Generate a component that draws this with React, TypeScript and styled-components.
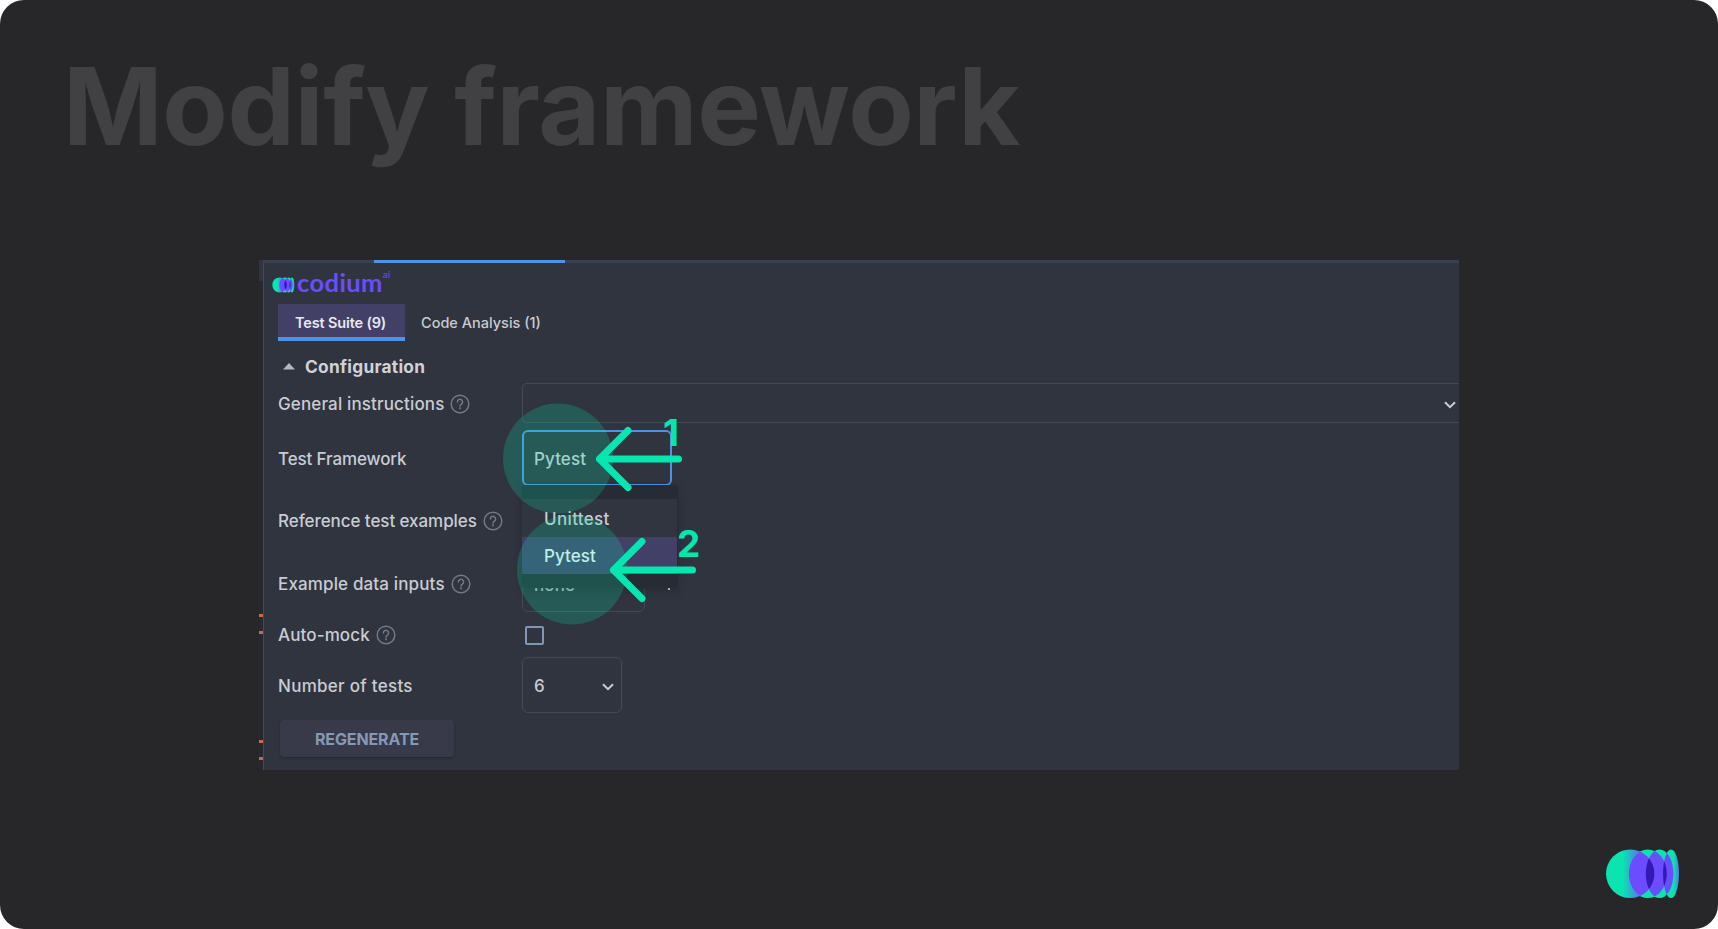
import React from "react";
import styled, { createGlobalStyle } from "styled-components";

const GlobalStyle = createGlobalStyle`
  body { margin: 0; background: #fff; }
  * { box-sizing: border-box; }
`;

const Slide = styled.main`
  position: relative;
  width: 1718px;
  height: 929px;
  background: #272729;
  border-radius: 24px;
  overflow: hidden;
  font-family: Inter, "Liberation Sans", sans-serif;
  color: #c9ccd3;
  padding-top: 41px;
`;

const Title = styled.h1`
  margin: 0 0 89px 63px;
  height: 130px;
  line-height: 130px;
  font-size: 107px;
  font-weight: 700;
  letter-spacing: -0.4px;
  color: #414143;
  white-space: nowrap;
`;

const Shot = styled.section`
  position: relative;
  display: flex;
  width: 1200px;
  height: 510px;
  margin-left: 259px;
`;

const Gutter = styled.div`
  position: relative;
  width: 4px;
  background: linear-gradient(#31353f 21px, #262a30 21px);
`;

const Marker = styled.i<{ $top: number }>`
  position: absolute;
  left: 0;
  top: ${(p) => p.$top}px;
  width: 4px;
  height: 3px;
  background: #c9694c;
`;

const Panel = styled.div`
  flex: 1;
  min-width: 0;
  background: #30343f;
  border-left: 1px solid #444959;
  border-top: 3px solid #3b4050;
  padding-left: 14px;
`;

const ActiveEdge = styled.div`
  width: 191px;
  height: 3px;
  margin: -3px 0 0 96px;
  background: #4f94e4;
`;

const Brand = styled.div`
  display: flex;
  height: 41px;
  margin-left: -6px;
`;

const BrandMark = styled.svg`
  width: 23px;
  height: 16px;
  margin-top: 14px;
`;

const BrandName = styled.span`
  margin: 4px 0 0 2px;
  font: 700 25.5px/30px Lato, sans-serif;
  letter-spacing: 0.4px;
  color: #6b4dff;
`;

const BrandSup = styled.span`
  margin-top: 7px;
  font: 700 9.5px/10px Lato, sans-serif;
  color: #6046e0;
`;

const Tabs = styled.nav`
  display: flex;
  height: 37px;
`;

const Tab = styled.div<{ $active?: boolean; $spacing: number }>`
  padding-left: ${(p) => (p.$active ? 17 : 16)}px;
  width: ${(p) => (p.$active ? "127px" : "auto")};
  line-height: 38px;
  font-size: 14.5px;
  font-weight: ${(p) => (p.$active ? 600 : 500)};
  white-space: nowrap;
  letter-spacing: ${(p) => p.$spacing}px;
  color: ${(p) => (p.$active ? "#e8e8ee" : "#c9ccd3")};
  background: ${(p) => (p.$active ? "#434068" : "transparent")};
  border-bottom: ${(p) => (p.$active ? "4px solid #4f94e4" : "0")};
`;

const SectionHead = styled.div`
  display: flex;
  align-items: center;
  height: 42px;
  padding: 8px 0 0 5px;
  gap: 10px;
  font-size: 17.3px;
  font-weight: 700;
  letter-spacing: 0.27px;
  color: #d0d2d8;
`;

const Form = styled.div`
  display: flex;
  flex-direction: column;
  gap: 7px;
`;

const Row = styled.div<{ $h: number }>`
  display: flex;
  align-items: center;
  height: ${(p) => p.$h}px;
`;

const Label = styled.div<{ $spacing: number; $drop?: boolean }>`
  display: flex;
  align-items: center;
  width: 244px;
  padding-top: ${(p) => (p.$drop ? 1 : 0)}px;
  flex: none;
  font-size: 17px;
  font-weight: 500;
  white-space: nowrap;
  letter-spacing: ${(p) => p.$spacing}px;
`;

const HelpIcon = styled.svg`
  width: 20px;
  height: 20px;
  margin-left: 6px;
`;

const Field = styled.div<{ $w?: number; $focus?: boolean; $open?: boolean }>`
  display: flex;
  align-items: center;
  justify-content: space-between;
  width: ${(p) => (p.$w ? p.$w + "px" : "auto")};
  flex: ${(p) => (p.$w ? "none" : "1")};
  height: 100%;
  padding: 1px ${(p) => (p.$w ? 7 : 3)}px 0 ${(p) => (p.$focus ? 10 : 11)}px;
  border: ${(p) => (p.$focus ? "2px solid #4f94e4" : "1px solid #454957")};
  ${(p) => p.$open && "border-right: 0;"}
  border-radius: ${(p) => (p.$open ? "5px 0 0 5px" : "6px")};
  font-size: 17px;
  font-weight: 500;
  letter-spacing: 0.1px;
  color: #c9ccd3;
`;

const ChevronIcon = styled.svg`
  width: 12px;
  height: 8px;
  margin-top: 2px;
`;

const Checkbox = styled.div`
  width: 19px;
  height: 19px;
  margin: 2px 0 0 3px;
  border: 2px solid #8096b3;
  border-radius: 2px;
`;

const AddIcon = styled.svg`
  width: 14px;
  height: 14px;
  margin: 0 0 0 17px;
`;

const Menu = styled.div`
  position: absolute;
  z-index: 1;
  left: 263px;
  top: 225px;
  width: 156px;
  height: 103px;
  padding: 14px 1px 14px 0;
  background: #272b33;
  border-radius: 2px;
  box-shadow: 0 3px 9px rgba(22, 24, 30, 0.28);
`;

const MenuItem = styled.div<{ $selected?: boolean }>`
  height: ${(p) => (p.$selected ? 37 : 38)}px;
  line-height: ${(p) => (p.$selected ? 38 : 40)}px;
  padding-left: 22px;
  font-size: 17px;
  font-weight: 500;
  letter-spacing: ${(p) => (p.$selected ? 0.05 : 0.35)}px;
  color: ${(p) => (p.$selected ? "#f1f1f5" : "#c9ccd3")};
  background: ${(p) => (p.$selected ? "#434068" : "#31353f")};
`;

const RegenerateButton = styled.button`
  width: 174px;
  height: 37px;
  margin-left: 2px;
  padding: 0;
  border: 0;
  border-radius: 4px;
  background: #383a49;
  box-shadow: 0 1px 2px rgba(20, 22, 28, 0.4);
  font: 700 16px/39px Inter, sans-serif;
  letter-spacing: -0.12px;
  color: #8499b5;
`;

const Callout = styled.div<{ $x: number; $y: number }>`
  position: absolute;
  z-index: 2;
  left: ${(p) => p.$x}px;
  top: ${(p) => p.$y}px;
  width: 200px;
  height: 112px;
`;

const CalloutNumber = styled.span<{ $x: number }>`
  position: absolute;
  left: ${(p) => p.$x}px;
  top: 8px;
  font-size: 37px;
  line-height: 44px;
  font-weight: 650;
  color: #05e6b0;
`;

const CornerLogo = styled.svg`
  position: absolute;
  left: 1605px;
  top: 848px;
  width: 76px;
  height: 52px;
`;

const Help = () => (
  <HelpIcon viewBox="0 0 20 20" fill="none" stroke="#727986" strokeWidth="1.5" strokeLinecap="round">
    <circle cx="10" cy="10" r="8.8" />
    <path d="M7.400 8a2.600 2.600 0 1 1 4 2.100c-.9.6-1.400 1-1.400 2" />
    <circle cx="10" cy="14.3" r=".35" fill="#727986" />
  </HelpIcon>
);

const Chevron = () => (
  <ChevronIcon viewBox="0 0 12 8" fill="none" stroke="#c9ccd3" strokeWidth="2">
    <path d="M1 1.200 6 6.200l5-5" />
  </ChevronIcon>
);

const ellipses = [
  { cx: 25.2, rx: 24.2 },
  { cx: 42.8, rx: 19 },
  { cx: 54.6, rx: 13.8 },
  { cx: 66, rx: 8 },
];

const LogoShapes = ({ id }: { id: string }) => (
  <>
    <defs>
      <linearGradient id={id + "g0"}>
        <stop offset=".35" stopColor="#0be3b0" />
        <stop offset=".85" stopColor="#6b4dff" />
      </linearGradient>
      <linearGradient id={id + "g1"}>
        <stop offset=".68" stopColor="#0be3b0" />
        <stop offset="1" stopColor="#4f7ce0" />
      </linearGradient>
      {ellipses.map((e, i) => (
        <clipPath key={i} id={id + "c" + i}>
          <ellipse cx={e.cx} cy="25.7" rx={e.rx} ry="24.3" />
        </clipPath>
      ))}
    </defs>
    {ellipses.map((e, i) => (
      <ellipse key={i} cx={e.cx} cy="25.7" rx={e.rx} ry="24.3" fill={`url(#${id}g${i ? 1 : 0})`} />
    ))}
    {[1, 2, 3].map((i) => (
      <ellipse key={i} cx={ellipses[i].cx} cy="25.7" rx={ellipses[i].rx} ry="24.3" fill="#6b4dff" clipPath={`url(#${id}c${i - 1})`} />
    ))}
    {[2, 3].map((i) => (
      <ellipse key={i} cx={ellipses[i].cx} cy="25.7" rx={ellipses[i].rx} ry="24.3" fill="#3319b5" clipPath={`url(#${id}c${i - 2})`} />
    ))}
  </>
);

type PointerProps = { x: number; y: number; label: string; labelX: number };

const Pointer = ({ x, y, label, labelX }: PointerProps) => (
  <Callout $x={x} $y={y}>
    <svg width="200" height="112" viewBox="0 0 200 112">
      <circle cx="55" cy="55.5" r="55" fill="#05e6b0" fillOpacity=".21" />
      <g transform="translate(96.5 56)" fill="none" stroke="#05e6b0" strokeWidth="7" strokeLinecap="round" strokeLinejoin="round">
        <path d="M79 0H0M28.500 -28.500 0 0 28.500 28.500" />
      </g>
    </svg>
    <CalloutNumber $x={labelX}>{label}</CalloutNumber>
  </Callout>
);

export default function App() {
  return (
    <>
      <GlobalStyle />
      <Slide>
        <Title>Modify framework</Title>
        <Shot>
          <Gutter>
            {[354, 371, 480, 497].map((top) => (
              <Marker key={top} $top={top} />
            ))}
          </Gutter>
          <Panel>
            <ActiveEdge />
            <Brand>
              <BrandMark viewBox="0 0 76 52" preserveAspectRatio="none">
                <LogoShapes id="brand" />
              </BrandMark>
              <BrandName>codium</BrandName>
              <BrandSup>ai</BrandSup>
            </Brand>
            <Tabs>
              <Tab $active $spacing={-0.15}>Test Suite (9)</Tab>
              <Tab $spacing={0}>Code Analysis (1)</Tab>
            </Tabs>
            <SectionHead>
              <svg width="12" height="7" viewBox="0 0 12 7" fill="#b5b8b8">
                <path d="M0 6.500 6 0l6 6.500z" />
              </svg>
              Configuration
            </SectionHead>
            <Form>
              <Row $h={40}>
                <Label $spacing={0.14} $drop>General instructions<Help /></Label>
                <Field $open><span /><Chevron /></Field>
              </Row>
              <Row $h={56}>
                <Label $spacing={-0.13} $drop>Test Framework</Label>
                <Field $w={150} $focus>Pytest</Field>
              </Row>
              <Row $h={56}>
                <Label $spacing={-0.07}>Reference test examples<Help /></Label>
              </Row>
              <Row $h={56}>
                <Label $spacing={0.14}>Example data inputs<Help /></Label>
                <Field $w={123}>none</Field>
                <AddIcon viewBox="0 0 14 14" stroke="#c9ccd3" strokeWidth="2">
                  <path d="M7 0v13M1 6.500h12" />
                </AddIcon>
              </Row>
              <Row $h={31}>
                <Label $spacing={0.12}>Auto-mock<Help /></Label>
                <Checkbox />
              </Row>
              <Row $h={56}>
                <Label $spacing={0.28} $drop>Number of tests</Label>
                <Field $w={100}>6<Chevron /></Field>
              </Row>
              <RegenerateButton>REGENERATE</RegenerateButton>
            </Form>
          </Panel>
          <Menu>
            <MenuItem>Unittest</MenuItem>
            <MenuItem $selected>Pytest</MenuItem>
          </Menu>
          <Pointer x={244} y={143} label="1" labelX={160} />
          <Pointer x={258} y={254} label="2" labelX={160} />
        </Shot>
        <CornerLogo viewBox="0 0 76 52">
          <LogoShapes id="corner" />
        </CornerLogo>
      </Slide>
    </>
  );
}
